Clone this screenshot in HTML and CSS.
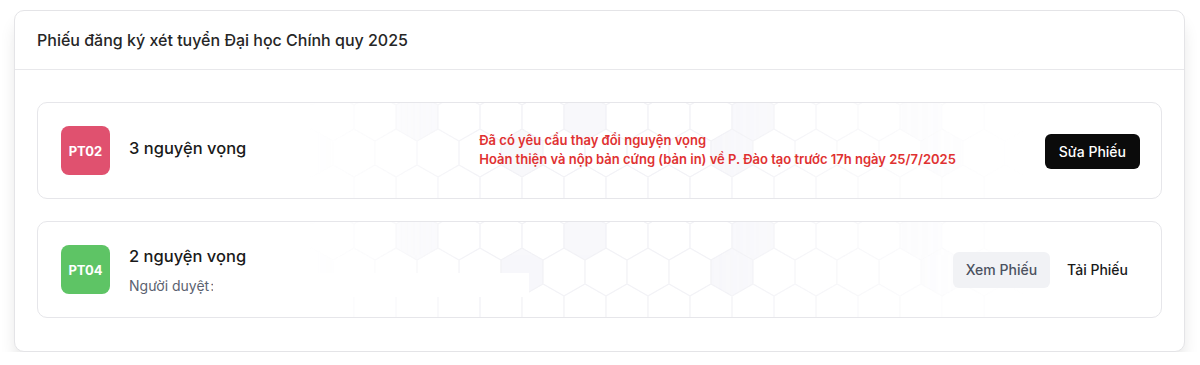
FILE: index.html
```html
<!DOCTYPE html>
<html lang="vi">
<head>
    <meta charset="UTF-8">
    <meta name="viewport" content="width=device-width, initial-scale=1.0">
    <title>Phiếu đăng ký xét tuyển</title>
    <link rel="stylesheet" href="styles.css">
</head>
<body>
    <div class="panel">
        <div class="panel-header">
            <h2>Phiếu đăng ký xét tuyển Đại học Chính quy 2025</h2>
        </div>

        <div class="panel-body">
            <!-- Phiếu PT02 -->
            <div class="ticket">
                <div class="badge badge-red">PT02</div>
                <div class="info info-single">
                    <div class="info-title">3 nguyện vọng</div>
                </div>
                <div class="notice">
                    <div>Đã có yêu cầu thay đổi nguyện vọng</div>
                    <div>Hoàn thiện và nộp bản cứng (bản in) về P. Đào tạo trước 17h ngày 25/7/2025</div>
                </div>
                <div class="actions">
                    <button class="btn btn-dark">Sửa Phiếu</button>
                </div>
            </div>

            <!-- Phiếu PT04 -->
            <div class="ticket">
                <div class="badge badge-green">PT04</div>
                <div class="info info-double">
                    <div class="info-title">2 nguyện vọng</div>
                    <div class="info-sub">Người duyệt <span class="cut">:</span><span class="hidden-name"></span></div>
                </div>
                <div class="actions">
                    <button class="btn btn-light">Xem Phiếu</button>
                    <button class="btn btn-ghost">Tải Phiếu</button>
                </div>
            </div>
        </div>
    </div>
</body>
</html>
```

FILE: styles.css
```css
* {
    box-sizing: border-box;
}

body {
    margin: 0;
    padding: 10px 15px 0 14px;
    font-family: Inter, "Noto Sans", sans-serif;
    background-color: #fff;
    color: #111;
}

.panel {
    background-color: #fff;
    border: 1px solid #e4e4e7;
    border-radius: 10px;
    box-shadow: 0 12px 18px -4px rgba(0, 0, 0, 0.14);
}

.panel-header {
    height: 59px;
    display: flex;
    align-items: center;
    padding: 0 22px;
    border-bottom: 1px solid #e8e8eb;
}

.panel-header h2 {
    margin: 0;
    font-size: 16px;
    font-weight: 500;
    color: #262626;
}

.panel-body {
    display: flex;
    flex-direction: column;
    gap: 22px;
    padding: 32px 22px 33px;
}

.ticket {
    position: relative;
    display: flex;
    align-items: center;
    min-height: 97px;
    padding: 0 21px 0 23px;
    border: 1px solid #e6e6ea;
    border-radius: 10px;
    background-color: #fff;
    overflow: hidden;
}

/* nen luc giac mo */
.ticket::before {
    content: "";
    position: absolute;
    inset: 0;
    background-image:
        url("data:image/svg+xml,%3Csvg xmlns='http://www.w3.org/2000/svg' width='42' height='72'%3E%3Cpath d='M21 0L42 12V36L21 48L0 36V12Z M21 48V72' fill='none' stroke='%23ececf2' stroke-width='1.3'/%3E%3C/svg%3E"),
        url("data:image/svg+xml,%3Csvg xmlns='http://www.w3.org/2000/svg' width='168' height='144'%3E%3Cpath d='M21 0L42 12V36L21 48L0 36V12Z' fill='%23f4f4f9'/%3E%3C/svg%3E"),
        url("data:image/svg+xml,%3Csvg xmlns='http://www.w3.org/2000/svg' width='210' height='216'%3E%3Cpath d='M42 36L63 48V72L42 84L21 72V48Z' fill='%23f4f4f9'/%3E%3C/svg%3E");
    background-position: 22px -10px;
    opacity: 0.85;
    -webkit-mask-image: linear-gradient(90deg, transparent 24%, rgba(0,0,0,.8) 40%, rgba(0,0,0,.8) 60%, transparent 88%);
    mask-image: linear-gradient(90deg, transparent 24%, rgba(0,0,0,.8) 40%, rgba(0,0,0,.8) 60%, transparent 88%);
    z-index: 0;
}

.ticket > * {
    position: relative;
    z-index: 1;
}

.badge {
    flex: 0 0 49px;
    height: 49px;
    border-radius: 8px;
    display: flex;
    align-items: center;
    justify-content: center;
    color: #fff;
    font-size: 13px;
    font-weight: 700;
}

.badge-red {
    background-color: #e0516f;
}

.badge-green {
    background-color: #5ec465;
}

.info {
    flex: 1;
    margin-left: 19px;
}

.info-single {
    margin-bottom: 5px;
}

.info-double {
    margin-top: 4px;
}

.info-title {
    font-size: 16.5px;
    font-weight: 500;
    color: #1a1a1a;
}

.info-sub {
    margin-top: 7px;
    font-size: 14px;
    color: #5b6270;
    display: flex;
    align-items: center;
}

.info-sub .cut {
    display: inline-block;
    width: 3px;
    overflow: hidden;
    margin-left: 1px;
}

.hidden-name {
    display: inline-block;
    width: 316px;
    height: 24px;
    background-color: #fff;
}

.notice {
    color: #e03131;
    font-size: 13px;
    font-weight: 600;
    line-height: 19px;
    margin-bottom: 2px;
}

.actions {
    display: flex;
    align-items: center;
    gap: 5px;
    margin-left: 89px;
}

.btn {
    font-family: inherit;
    font-size: 14px;
    font-weight: 500;
    border: none;
    border-radius: 6px;
    cursor: pointer;
    height: 36px;
}

.btn-dark {
    background-color: #0b0b0b;
    color: #fff;
    padding: 0 14px;
    height: 35px;
    margin-top: 1px;
}

.btn-light {
    background-color: #f1f2f5;
    color: #4b5160;
    padding: 0 13px;
}

.btn-ghost {
    background: none;
    color: #1a1a1a;
    padding: 0 12px;
}
```
